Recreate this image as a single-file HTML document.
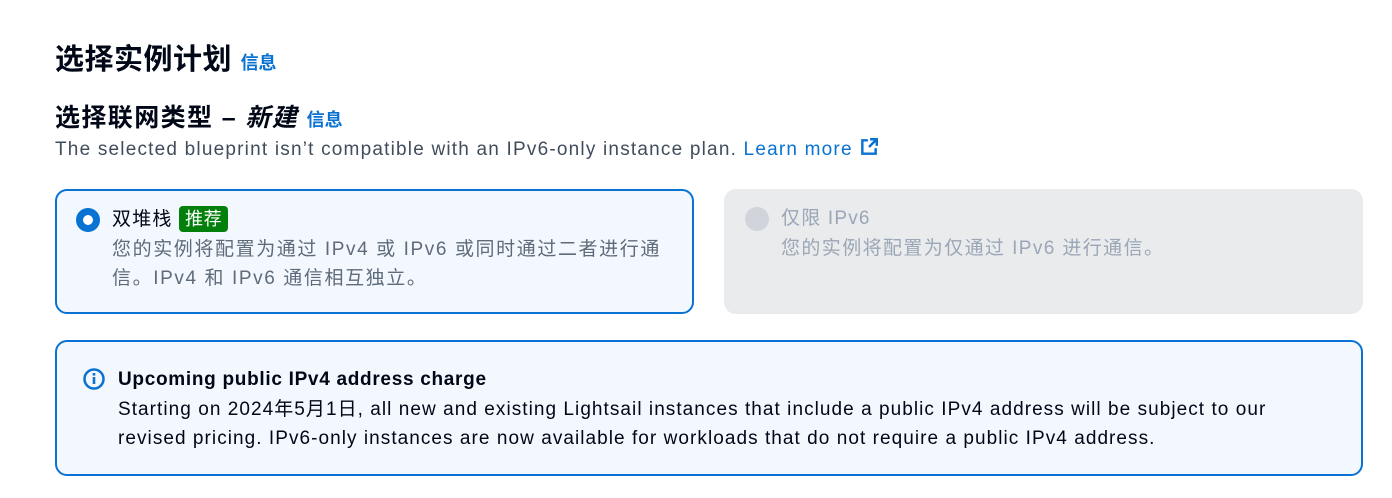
<!DOCTYPE html>
<html><head><meta charset="utf-8"><style>
*{margin:0;padding:0;box-sizing:border-box}
body{width:1392px;height:498px;background:#fff;font-family:"Liberation Sans","Noto Sans CJK SC",sans-serif;color:#000716;position:relative;overflow:hidden}
.a{position:absolute;white-space:nowrap}
.info{color:#0972d3;font-weight:bold;font-size:18px;letter-spacing:0}
h1{font-size:29px;font-weight:bold;letter-spacing:0.5px}
h2{font-size:25px;font-weight:bold;letter-spacing:1.4px}
.card{position:absolute;top:189px;width:639px;height:125px;border-radius:12px}
.c1{left:55px;border:2px solid #0972d3;background:#f2f8fd}
.c2{left:724px;background:#e9ebed}
.t{font-size:19px;line-height:29px;letter-spacing:1.2px}
.d{color:#5f6b7a}
</style></head><body>
<div class="a" style="left:55px;top:36px"><h1>选择实例计划 <span class="info">信息</span></h1></div>
<div class="a" style="left:55px;top:98px"><h2>选择联网类型 – <i>新建</i> <span class="info">信息</span></h2></div>
<div class="a t" style="left:55px;top:135px;color:#414d5c">The selected blueprint isn’t compatible with an IPv6-only instance plan. <span style="color:#0972d3">Learn more <svg width="20" height="20" viewBox="0 0 18 18" style="vertical-align:-2px"><path d="M8 3H3v12h12v-5" fill="none" stroke="#0972d3" stroke-width="2.2"/><path d="M10 2h6v6M16 2l-7 7" fill="none" stroke="#0972d3" stroke-width="2.2"/></svg></span></div>
<div class="card c1">
<div class="a" style="left:19px;top:17px;width:24px;height:24px;border-radius:50%;border:7px solid #0972d3;background:#fff"></div>
<div class="a t" style="left:55px;top:14px">双堆栈 <span style="background:#037f0c;color:#fff;font-size:18px;padding:0 6px;border-radius:4px;line-height:26px;display:inline-block;letter-spacing:0.5px">推荐</span></div>
<div class="a t d" style="left:55px;top:44px;letter-spacing:1.6px">您的实例将配置为通过 IPv4 或 IPv6 或同时通过二者进行通<br>信。IPv4 和 IPv6 通信相互独立。</div>
</div>
<div class="card c2">
<div class="a" style="left:21px;top:18px;width:24px;height:24px;border-radius:50%;background:#d1d5db"></div>
<div class="a t" style="left:57px;top:15px;color:#9ba7b6">仅限 IPv6</div>
<div class="a t" style="left:57px;top:45px;color:#9ba7b6;letter-spacing:1.4px">您的实例将配置为仅通过 IPv6 进行通信。</div>
</div>
<div class="a" style="left:55px;top:340px;width:1308px;height:136px;border:2px solid #0972d3;border-radius:12px;background:#f2f8fd">
<svg class="a" style="left:25px;top:25px" width="24" height="24" viewBox="0 0 24 24"><circle cx="12" cy="12" r="9.5" fill="none" stroke="#0972d3" stroke-width="2.5"/><rect x="10.7" y="10" width="2.6" height="7" fill="#0972d3"/><rect x="10.7" y="6" width="2.6" height="2.6" fill="#0972d3"/></svg>
<div class="a t" style="left:61px;top:23px;font-weight:bold;letter-spacing:0.7px">Upcoming public IPv4 address charge</div>
<div class="a t" style="left:61px;top:53px;letter-spacing:1.05px">Starting on 2024年5月1日, all new and existing Lightsail instances that include a public IPv4 address will be subject to our<br>revised pricing. IPv6-only instances are now available for workloads that do not require a public IPv4 address.</div>
</div>
</body></html>
